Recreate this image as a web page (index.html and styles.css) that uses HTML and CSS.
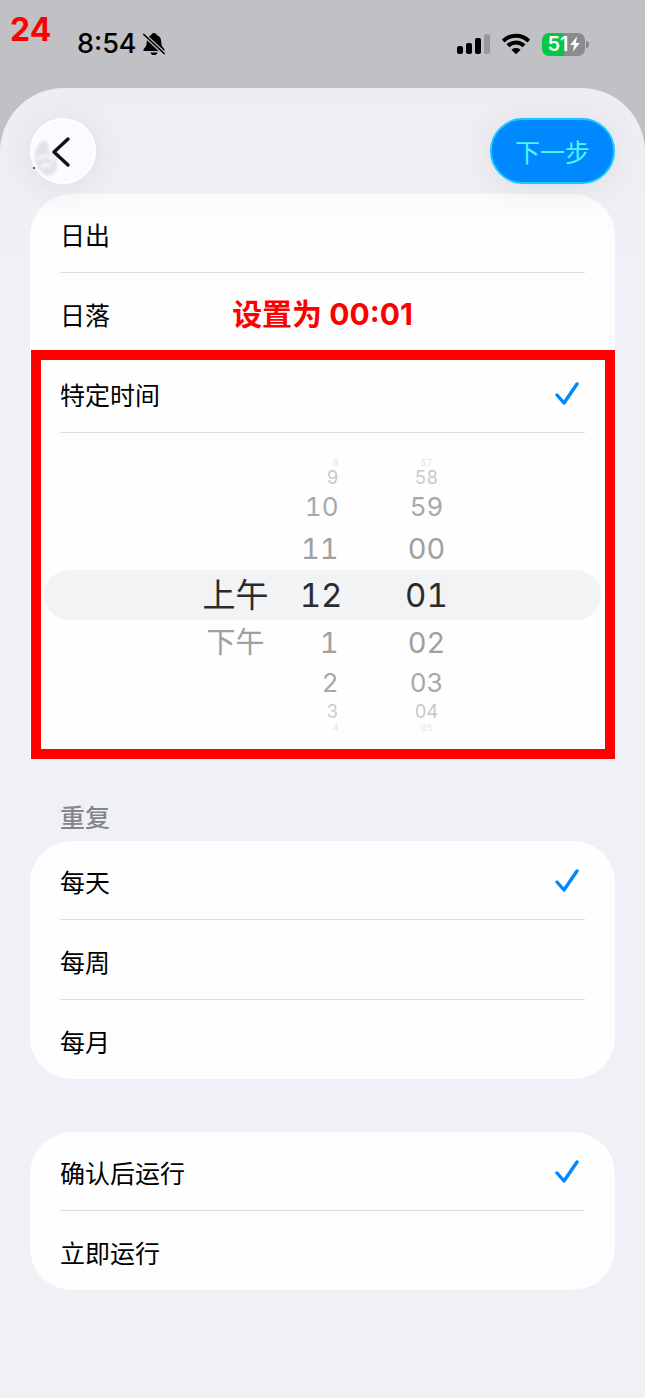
FILE: index.html
```html
<!DOCTYPE html>
<html lang="zh-CN">
<head>
  <meta charset="UTF-8" />
  <meta name="viewport" content="width=device-width, initial-scale=1.0"/>
  <title>特定时间</title>
  <link rel="stylesheet" href="styles.css">
</head>
<body>
  <span class="step-number">24</span>

  <header class="status-bar">
    <div class="status-left">
      <span class="clock">8:54</span>
      <svg class="bell" viewBox="0 0 22 24" width="22" height="24">
        <path d="M11 1c-1.500 0-2.500.9-2.700 2C5.300 4.100 3.900 6.500 3.800 9.400c-.1 4-1 5.300-2.700 7C-.1 17.700.2 19 1.700 19h18.600c1.500 0 1.800-1.300.6-2.600-1.700-1.700-2.600-3-2.700-7-.1-2.900-1.500-5.300-4.500-6.400C13.500 1.900 12.500 1 11 1z"/>
        <path d="M7.400 20.400h7.200c-.5 1.700-1.900 2.600-3.600 2.600s-3.100-.9-3.600-2.600z"/>
        <path d="M-.5 1.300l22.500 21" stroke="#c1c0c5" stroke-width="4"/>
        <path d="M.8 2.500l20.400 19" stroke="#000" stroke-width="1.700" stroke-linecap="round"/>
      </svg>
    </div>
    <div class="status-right">
      <svg viewBox="0 0 33 22" width="33" height="22">
        <rect x="0" y="13" width="6" height="8" rx="2"/>
        <rect x="9" y="10" width="6" height="11" rx="2"/>
        <rect x="18" y="5" width="6" height="16" rx="2"/>
        <rect x="27" y="1" width="6" height="20" rx="2" fill="#98979b"/>
      </svg>
      <svg viewBox="0 0 30 22" width="30" height="22">
        <path d="M2.200 8C9.400 1 20.600 1 27.800 8M6.900 12.700C11.400 8.400 18.600 8.400 23.100 12.700" fill="none" stroke="#000" stroke-width="4"/>
        <path d="M15 21.300l-4.600-4.500c2.500-2.400 6.700-2.400 9.200 0z"/>
      </svg>
      <div class="battery">
        <span class="battery-level">51</span>
        <svg viewBox="0 0 10 16" width="10" height="16">
          <path d="M7.200.2L.2 9h4L2.800 15.800 9.800 6.900h-4z" fill="#fff"/>
        </svg>
      </div>
    </div>
  </header>

  <main class="sheet">
    <nav class="nav">
      <button class="back" type="button" aria-label="返回">
        <svg viewBox="0 0 66 66" width="66" height="66">
          <defs>
            <filter id="soft"><feGaussianBlur stdDeviation="1.400"/></filter>
          </defs>
          <g filter="url(#soft)">
            <path d="M10 25c3-4 8-3 8 2l1 8c6 2 9 7 8 13-1 7-6 11-11 9C9 53 5 46 5 37c0-5 2-9 5-12z" fill="#e2e2e5"/>
            <path d="M8 41c5-5 14-4 15 3M12 50c1-4 7-5 9-1" fill="none" stroke="#f8f8fc" stroke-width="3"/>
          </g>
          <circle cx="4" cy="50" r="1" fill="#333"/>
          <path d="M38 21L24 34l14 13" fill="none" stroke="#111" stroke-width="3.400" stroke-linecap="round" stroke-linejoin="round"/>
        </svg>
      </button>
      <button class="next" type="button">下一步</button>
    </nav>

    <section class="card card-top">
      <label class="row">
        <input type="radio" name="trigger">
        <span>日出</span>
      </label>
      <label class="row">
        <input type="radio" name="trigger">
        <span>日落</span>
      </label>
      <p class="note">设置为 00:01</p>

      <div class="marked">
        <label class="row">
          <input type="radio" name="trigger" checked>
          <span>特定时间</span>
          <svg class="check" viewBox="0 0 24 24" width="24" height="24"><path d="M2 13l7 8L22 2"/></svg>
        </label>

        <div class="picker">
          <div class="wheel wheel-period">
            <span class="slot far"></span>
            <span class="slot outer"></span>
            <span class="slot mid"></span>
            <span class="slot near"></span>
            <button type="button" class="slot current">上午</button>
            <button type="button" class="slot near">下午</button>
          </div>
          <div class="wheel wheel-hour">
            <button type="button" class="slot far">8</button>
            <button type="button" class="slot outer">9</button>
            <button type="button" class="slot mid">10</button>
            <button type="button" class="slot near">11</button>
            <button type="button" class="slot current">12</button>
            <button type="button" class="slot near">1</button>
            <button type="button" class="slot mid">2</button>
            <button type="button" class="slot outer">3</button>
            <button type="button" class="slot far">4</button>
          </div>
          <div class="wheel wheel-minute">
            <button type="button" class="slot far">57</button>
            <button type="button" class="slot outer">58</button>
            <button type="button" class="slot mid">59</button>
            <button type="button" class="slot near">00</button>
            <button type="button" class="slot current">01</button>
            <button type="button" class="slot near">02</button>
            <button type="button" class="slot mid">03</button>
            <button type="button" class="slot outer">04</button>
            <button type="button" class="slot far">05</button>
          </div>
        </div>
      </div>
    </section>

    <h2 class="section-title">重复</h2>
    <section class="card">
      <label class="row">
        <input type="radio" name="repeat" checked>
        <span>每天</span>
        <svg class="check" viewBox="0 0 24 24" width="24" height="24"><path d="M2 13l7 8L22 2"/></svg>
      </label>
      <label class="row">
        <input type="radio" name="repeat">
        <span>每周</span>
      </label>
      <label class="row">
        <input type="radio" name="repeat">
        <span>每月</span>
      </label>
    </section>

    <section class="card card-run">
      <label class="row">
        <input type="radio" name="run" checked>
        <span>确认后运行</span>
        <svg class="check" viewBox="0 0 24 24" width="24" height="24"><path d="M2 13l7 8L22 2"/></svg>
      </label>
      <label class="row">
        <input type="radio" name="run">
        <span>立即运行</span>
      </label>
    </section>
  </main>
</body>
</html>
```
FILE: styles.css
```css
* {
  box-sizing: border-box;
}

body {
  margin: 0;
  min-height: 100vh;
  display: flex;
  flex-direction: column;
  position: relative;
  background: #c1c0c5;
  color: #000;
  font-family: Inter, "Noto Sans CJK SC", sans-serif;
  font-size: 25px;
  line-height: 36px;
}

button {
  padding: 0;
  border: none;
  background: none;
  color: inherit;
  font: inherit;
  cursor: pointer;
}

svg {
  display: block;
}

/* red annotations */
.step-number {
  position: absolute;
  top: 12px;
  left: 10px;
  color: #ff0000;
  font-size: 32px;
  font-weight: 700;
}

.note {
  position: absolute;
  top: 102px;
  left: 0;
  right: 0;
  margin: 0;
  color: #ff0000;
  font-size: 30px;
  font-weight: 700;
  text-align: center;
  pointer-events: none;
}

.marked {
  position: relative;
}

.marked::after {
  content: "";
  position: absolute;
  inset: -4px 0 0 1px;
  border: 10px solid #ff0000;
  pointer-events: none;
}

/* status bar */
.status-bar {
  display: flex;
  justify-content: space-between;
  align-items: center;
  height: 88px;
  padding: 0 60px 0 77px;
}

.status-left,
.status-right {
  display: flex;
  align-items: center;
}

.status-left {
  gap: 6px;
}

.status-right {
  gap: 11px;
}

.clock {
  font-size: 27px;
  font-weight: 500;
}

.battery {
  position: relative;
  display: flex;
  align-items: center;
  justify-content: center;
  gap: 1px;
  width: 43px;
  height: 23px;
  border-radius: 7px;
  background: linear-gradient(90deg, #04c744 51%, #8b8b8e 51%);
}

.battery::after {
  content: "";
  position: absolute;
  top: 8px;
  right: -4px;
  width: 3px;
  height: 7px;
  border-radius: 0 3px 3px 0;
  background: #8b8b8e;
}

.battery-level {
  color: #fff;
  font-size: 20px;
  font-weight: 600;
  line-height: 23px;
}

/* sheet */
.sheet {
  flex: 1;
  padding: 0 30px 40px;
  border-radius: 64px 64px 0 0;
  background: linear-gradient(#ededf2, #f0f1f6 200px);
}

.nav {
  display: flex;
  justify-content: space-between;
  padding: 30px 0 10px;
}

.back,
.next {
  position: relative;
  z-index: 1;
  height: 66px;
  border-radius: 33px;
  box-shadow: 0 4px 32px rgba(60, 60, 80, 0.09);
}

.back {
  width: 66px;
  border-radius: 50%;
  background: radial-gradient(closest-side, #fafaff 92%, #ffffff 96%);
}

.next {
  padding: 4px 23px 0;
  border: 2px solid #18c8ff;
  background: #0088ff;
  color: #4ff6ff;
}

.card {
  position: relative;
  display: flex;
  flex-direction: column;
  gap: 1px;
  border-radius: 42px;
  background: #fefefe;
}

.card-top {
  border-radius: 42px 42px 0 0;
  background: linear-gradient(#fafbfb, #fefefe 48px);
}

.card-run {
  margin-top: 53px;
}

.row {
  display: flex;
  align-items: center;
  justify-content: space-between;
  margin: 0 30px;
  padding: 24px 6px 18px 0;
  border-bottom: 1px solid #dddee0;
  cursor: pointer;
}

.row:last-child {
  border-bottom: none;
}

.row input {
  position: absolute;
  opacity: 0;
  pointer-events: none;
}

.check {
  margin-bottom: 4px;
}

.check path {
  fill: none;
  stroke: #0088ff;
  stroke-width: 3.4;
  stroke-linecap: round;
  stroke-linejoin: round;
}

.section-title {
  margin: 0;
  padding: 41px 30px 5px;
  color: #85858a;
  font-size: 25px;
  font-weight: 500;
}

/* time picker */
.picker {
  position: relative;
  display: grid;
  grid-template-columns: 66px 74px 106px;
  justify-content: center;
  padding: 24px 0 26px 6px;
  font-variant-numeric: tabular-nums;
}

.picker::before {
  content: "";
  position: absolute;
  top: 137px;
  left: 14px;
  right: 14px;
  height: 50px;
  border-radius: 25px;
  background: #f2f3f5;
}

.wheel {
  position: relative;
  display: flex;
  flex-direction: column;
  text-align: center;
}

.wheel-hour {
  align-items: flex-end;
}

.wheel-hour .slot:not(.current) {
  padding-right: 4px;
}

.wheel-minute {
  padding-left: 62px;
}

.slot {
  display: flex;
  align-items: center;
  justify-content: center;
  line-height: 1;
  white-space: nowrap;
}

.slot.current {
  height: 50px;
  color: #2b2b2c;
  font-size: 33px;
}

.slot.near {
  height: 44px;
  color: #a0a0a1;
  font-size: 29px;
}

.slot.mid {
  height: 38px;
  color: #a8a8a9;
  font-size: 26px;
}

.slot.outer {
  height: 20px;
  color: #c8c8c9;
  font-size: 18px;
}

.slot.far {
  height: 11px;
  color: #e2e2e3;
  font-size: 9px;
}
```
